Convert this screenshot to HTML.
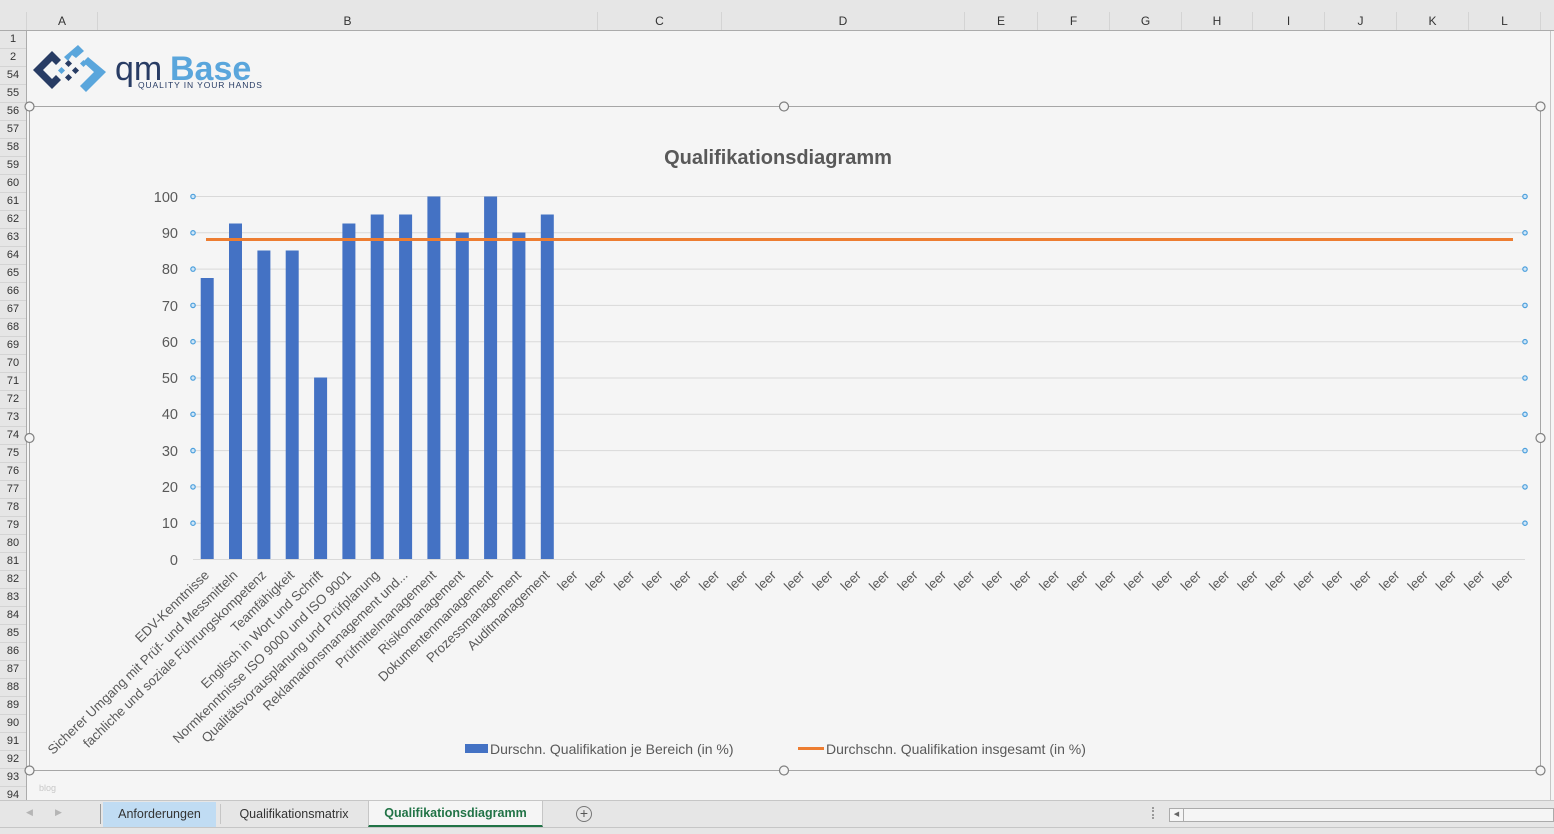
<!DOCTYPE html>
<html><head><meta charset="utf-8">
<style>
*{margin:0;padding:0;box-sizing:border-box}
body{width:1554px;height:834px;overflow:hidden;background:#f5f5f5;font-family:"Liberation Sans",sans-serif;position:relative}
.top{position:absolute;left:0;top:0;width:1554px;height:12px;background:#e6e6e6}
.colhdr{position:absolute;left:0;top:12px;width:1554px;height:19px;background:#e6e6e6;border-bottom:1px solid #ababab}
.colhdr div{position:absolute;top:0;height:18px;border-right:1px solid #d4d4d4;font-size:12px;color:#333;text-align:center;line-height:18px}
.rowhdr{position:absolute;left:0;top:31px;width:27px;height:773px;background:#e6e6e6;border-right:1px solid #ababab}
.rowhdr div{height:18px;border-bottom:1px solid #d4d4d4;font-size:11px;color:#333;text-align:center;line-height:17px}
.tabs{position:absolute;left:0;top:800px;width:1554px;height:34px;background:#e6e6e6;border-top:1px solid #c6c6c6}
.tab{position:absolute;top:1px;height:25px;font-size:12.5px;line-height:25px;color:#333;text-align:center}
</style></head><body>
<div class="top"></div>
<div class="colhdr">
<div style="left:0;width:27px"></div>
<div style="left:27px;width:71px">A</div>
<div style="left:98px;width:500px">B</div>
<div style="left:598px;width:124px">C</div>
<div style="left:722px;width:243px">D</div>
<div style="left:965px;width:73px">E</div>
<div style="left:1038px;width:72px">F</div>
<div style="left:1110px;width:72px">G</div>
<div style="left:1182px;width:71px">H</div>
<div style="left:1253px;width:72px">I</div>
<div style="left:1325px;width:72px">J</div>
<div style="left:1397px;width:72px">K</div>
<div style="left:1469px;width:72px">L</div>
</div>
<div class="rowhdr">
<div>1</div><div>2</div><div>54</div><div>55</div><div>56</div><div>57</div><div>58</div><div>59</div><div>60</div><div>61</div><div>62</div><div>63</div><div>64</div><div>65</div><div>66</div><div>67</div><div>68</div><div>69</div><div>70</div><div>71</div><div>72</div><div>73</div><div>74</div><div>75</div><div>76</div><div>77</div><div>78</div><div>79</div><div>80</div><div>81</div><div>82</div><div>83</div><div>84</div><div>85</div><div>86</div><div>87</div><div>88</div><div>89</div><div>90</div><div>91</div><div>92</div><div>93</div><div>94</div>
</div>
<div style="position:absolute;left:39px;top:783px;font-size:9px;color:#c8c8c8">blog</div>
<div style="position:absolute;left:1550px;top:31px;width:1px;height:769px;background:#c6c6c6"></div>

<!-- logo -->
<svg style="position:absolute;left:30px;top:44px" width="240" height="52" viewBox="30 44 240 52">
<path d="M52 51 L61 60 L56 65 L52 61 L43 70 L52 79 L56 75 L61 80 L52 89 L33 70 Z" fill="#283c64"/>
<rect x="66" y="61" width="5" height="5" fill="#283c64" transform="rotate(45 68.5 63.5)"/>
<rect x="59" y="68" width="5" height="5" fill="#5aa6dc" transform="rotate(45 61.5 70.5)"/>
<rect x="66" y="75" width="5" height="5" fill="#283c64" transform="rotate(45 68.5 77.5)"/>
<rect x="73" y="68" width="5" height="5" fill="#283c64" transform="rotate(45 75.5 70.5)"/>
<rect x="81" y="61" width="5" height="5" fill="#5aa6dc" transform="rotate(45 83.5 63.5)"/>
<path d="M64 57 L78 45 L84 51 L76 58 L72 55 L68 61 Z" fill="#5aa6dc"/>
<path d="M88 57 L106 72 L86 92 L80 86 L94 72 L83 62 Z" fill="#5aa6dc"/>
<text x="115" y="80" font-family="Liberation Sans,sans-serif" font-size="34" fill="#283c64">qm</text>
<text x="170" y="80" font-family="Liberation Sans,sans-serif" font-size="34" font-weight="bold" fill="#5aa6dc">Base</text>
<text x="138" y="88" font-family="Liberation Sans,sans-serif" font-size="8.5" fill="#283c64" letter-spacing="0.9">QUALITY IN YOUR HANDS</text>
</svg>

<svg style="position:absolute;left:0;top:0" width="1554" height="834">
<rect x="29.5" y="106.5" width="1511" height="664" fill="#f5f5f5" stroke="#a6a6a6" stroke-width="1"/>
<g fill="#f5f5f5" stroke="#7f7f7f" stroke-width="1.2">
<circle cx="29.5" cy="106.5" r="4.5"/><circle cx="784" cy="106.5" r="4.5"/><circle cx="1540.5" cy="106.5" r="4.5"/>
<circle cx="29.5" cy="438" r="4.5"/><circle cx="1540.5" cy="438" r="4.5"/>
<circle cx="29.5" cy="770.5" r="4.5"/><circle cx="784" cy="770.5" r="4.5"/><circle cx="1540.5" cy="770.5" r="4.5"/>
</g>
<text x="778" y="164" text-anchor="middle" font-size="20" font-weight="bold" fill="#595959">Qualifikationsdiagramm</text>
<g stroke="#d9d9d9" stroke-width="1">
<line x1="193" x2="1525" y1="196.5" y2="196.5"/><line x1="193" x2="1525" y1="232.8" y2="232.8"/>
<line x1="193" x2="1525" y1="269.1" y2="269.1"/><line x1="193" x2="1525" y1="305.4" y2="305.4"/>
<line x1="193" x2="1525" y1="341.7" y2="341.7"/><line x1="193" x2="1525" y1="378" y2="378"/>
<line x1="193" x2="1525" y1="414.3" y2="414.3"/><line x1="193" x2="1525" y1="450.6" y2="450.6"/>
<line x1="193" x2="1525" y1="486.9" y2="486.9"/><line x1="193" x2="1525" y1="523.2" y2="523.2"/>
<line x1="193" x2="1525" y1="559.5" y2="559.5"/>
</g>
<g font-size="14.5" fill="#595959" text-anchor="end">
<text x="178" y="202">100</text><text x="178" y="238">90</text><text x="178" y="274">80</text>
<text x="178" y="311">70</text><text x="178" y="347">60</text><text x="178" y="383">50</text>
<text x="178" y="419">40</text><text x="178" y="456">30</text><text x="178" y="492">20</text>
<text x="178" y="528">10</text><text x="178" y="565">0</text>
</g>
<g fill="#cfe6f8" stroke="#4b9fdc" stroke-width="1.2">
<circle cx="193" cy="196.5" r="2.2"/><circle cx="193" cy="232.8" r="2.2"/><circle cx="193" cy="269.1" r="2.2"/><circle cx="193" cy="305.4" r="2.2"/><circle cx="193" cy="341.7" r="2.2"/><circle cx="193" cy="378" r="2.2"/><circle cx="193" cy="414.3" r="2.2"/><circle cx="193" cy="450.6" r="2.2"/><circle cx="193" cy="486.9" r="2.2"/><circle cx="193" cy="523.2" r="2.2"/>
<circle cx="1525" cy="196.5" r="2.2"/><circle cx="1525" cy="232.8" r="2.2"/><circle cx="1525" cy="269.1" r="2.2"/><circle cx="1525" cy="305.4" r="2.2"/><circle cx="1525" cy="341.7" r="2.2"/><circle cx="1525" cy="378" r="2.2"/><circle cx="1525" cy="414.3" r="2.2"/><circle cx="1525" cy="450.6" r="2.2"/><circle cx="1525" cy="486.9" r="2.2"/><circle cx="1525" cy="523.2" r="2.2"/>
</g>
<g fill="#4472c4">
<rect x="200.7" y="278" width="13" height="281"/>
<rect x="229" y="223.5" width="13" height="335.5"/>
<rect x="257.4" y="250.5" width="13" height="308.5"/>
<rect x="285.7" y="250.5" width="13" height="308.5"/>
<rect x="314.1" y="377.5" width="13" height="181.5"/>
<rect x="342.4" y="223.5" width="13" height="335.5"/>
<rect x="370.7" y="214.5" width="13" height="344.5"/>
<rect x="399.1" y="214.5" width="13" height="344.5"/>
<rect x="427.4" y="196.5" width="13" height="362.5"/>
<rect x="455.8" y="232.5" width="13" height="326.5"/>
<rect x="484.1" y="196.5" width="13" height="362.5"/>
<rect x="512.4" y="232.5" width="13" height="326.5"/>
<rect x="540.8" y="214.5" width="13" height="344.5"/>
</g>
<line x1="206" x2="1513" y1="239.5" y2="239.5" stroke="#ed7d31" stroke-width="3"/>
<g font-size="13.3" fill="#595959" text-anchor="end">
<text transform="translate(210,576) rotate(-44)">EDV-Kenntnisse</text>
<text transform="translate(238.5,576) rotate(-44)">Sicherer Umgang mit Prüf- und Messmitteln</text>
<text transform="translate(267,576) rotate(-44)">fachliche und soziale Führungskompetenz</text>
<text transform="translate(295.2,576) rotate(-44)">Teamfähigkeit</text>
<text transform="translate(323.6,576) rotate(-44)">Englisch in Wort und Schrift</text>
<text transform="translate(352,576) rotate(-44)">Normkenntnisse ISO 9000 und ISO 9001</text>
<text transform="translate(380.2,576) rotate(-44)">Qualitätsvorausplanung und Prüfplanung</text>
<text transform="translate(408.6,576) rotate(-44)">Reklamationsmanagement und...</text>
<text transform="translate(437,576) rotate(-44)">Prüfmittelmanagement</text>
<text transform="translate(465.3,576) rotate(-44)">Risikomanagement</text>
<text transform="translate(493.6,576) rotate(-44)">Dokumentenmanagement</text>
<text transform="translate(522,576) rotate(-44)">Prozessmanagement</text>
<text transform="translate(550.3,576) rotate(-44)">Auditmanagement</text>
<text transform="translate(578.6,576) rotate(-44)">leer</text>
<text transform="translate(606.9,576) rotate(-44)">leer</text>
<text transform="translate(635.3,576) rotate(-44)">leer</text>
<text transform="translate(663.6,576) rotate(-44)">leer</text>
<text transform="translate(692,576) rotate(-44)">leer</text>
<text transform="translate(720.3,576) rotate(-44)">leer</text>
<text transform="translate(748.6,576) rotate(-44)">leer</text>
<text transform="translate(777,576) rotate(-44)">leer</text>
<text transform="translate(805.3,576) rotate(-44)">leer</text>
<text transform="translate(833.7,576) rotate(-44)">leer</text>
<text transform="translate(862,576) rotate(-44)">leer</text>
<text transform="translate(890.3,576) rotate(-44)">leer</text>
<text transform="translate(918.7,576) rotate(-44)">leer</text>
<text transform="translate(947,576) rotate(-44)">leer</text>
<text transform="translate(975.4,576) rotate(-44)">leer</text>
<text transform="translate(1003.7,576) rotate(-44)">leer</text>
<text transform="translate(1032,576) rotate(-44)">leer</text>
<text transform="translate(1060.4,576) rotate(-44)">leer</text>
<text transform="translate(1088.7,576) rotate(-44)">leer</text>
<text transform="translate(1117.1,576) rotate(-44)">leer</text>
<text transform="translate(1145.4,576) rotate(-44)">leer</text>
<text transform="translate(1173.7,576) rotate(-44)">leer</text>
<text transform="translate(1202.1,576) rotate(-44)">leer</text>
<text transform="translate(1230.4,576) rotate(-44)">leer</text>
<text transform="translate(1258.8,576) rotate(-44)">leer</text>
<text transform="translate(1287.1,576) rotate(-44)">leer</text>
<text transform="translate(1315.4,576) rotate(-44)">leer</text>
<text transform="translate(1343.8,576) rotate(-44)">leer</text>
<text transform="translate(1372.1,576) rotate(-44)">leer</text>
<text transform="translate(1400.5,576) rotate(-44)">leer</text>
<text transform="translate(1428.8,576) rotate(-44)">leer</text>
<text transform="translate(1457.1,576) rotate(-44)">leer</text>
<text transform="translate(1485.5,576) rotate(-44)">leer</text>
<text transform="translate(1513.8,576) rotate(-44)">leer</text>
</g>
<rect x="465" y="744" width="23" height="9" fill="#4472c4"/>
<text x="490" y="754" font-size="14" fill="#595959">Durschn. Qualifikation je Bereich (in %)</text>
<line x1="798" x2="824" y1="748.5" y2="748.5" stroke="#ed7d31" stroke-width="3"/>
<text x="826" y="754" font-size="14" fill="#595959">Durchschn. Qualifikation insgesamt (in %)</text>
</svg>

<div class="tabs">
<div style="position:absolute;left:26px;top:6px;font-size:9px;color:#b5b5b5">&#9664;</div>
<div style="position:absolute;left:55px;top:6px;font-size:9px;color:#b5b5b5">&#9654;</div>
<div style="position:absolute;left:100px;top:3px;width:1px;height:20px;background:#9a9a9a"></div>
<div class="tab" style="left:103px;width:113px;background:#c0dcf3">Anforderungen</div>
<div style="position:absolute;left:220px;top:3px;width:1px;height:20px;background:#c6c6c6"></div>
<div class="tab" style="left:222px;width:144px">Qualifikationsmatrix</div>
<div class="tab" style="left:368px;width:175px;background:#f5f5f5;color:#217346;font-weight:bold;border-bottom:2px solid #217346;top:0;height:26px;border-left:1px solid #c6c6c6;border-right:1px solid #c6c6c6">Qualifikationsdiagramm</div>
<div style="position:absolute;left:576px;top:5px;width:16px;height:16px;border:1px solid #777;border-radius:50%;font-size:14px;line-height:13px;text-align:center;color:#555">+</div>
<div style="position:absolute;left:1152px;top:6px;width:2px;height:12px;border-left:2px dotted #9a9a9a"></div>
<div style="position:absolute;left:1169px;top:7px;width:385px;height:14px;background:#f5f5f5;border:1px solid #ababab"></div>
<div style="position:absolute;left:1169px;top:7px;width:15px;height:14px;border:1px solid #ababab;font-size:7px;line-height:12px;text-align:center;color:#666">&#9664;</div>
<div style="position:absolute;left:0;top:26px;width:1554px;height:1px;background:#c6c6c6"></div>
</div>
</body></html>
